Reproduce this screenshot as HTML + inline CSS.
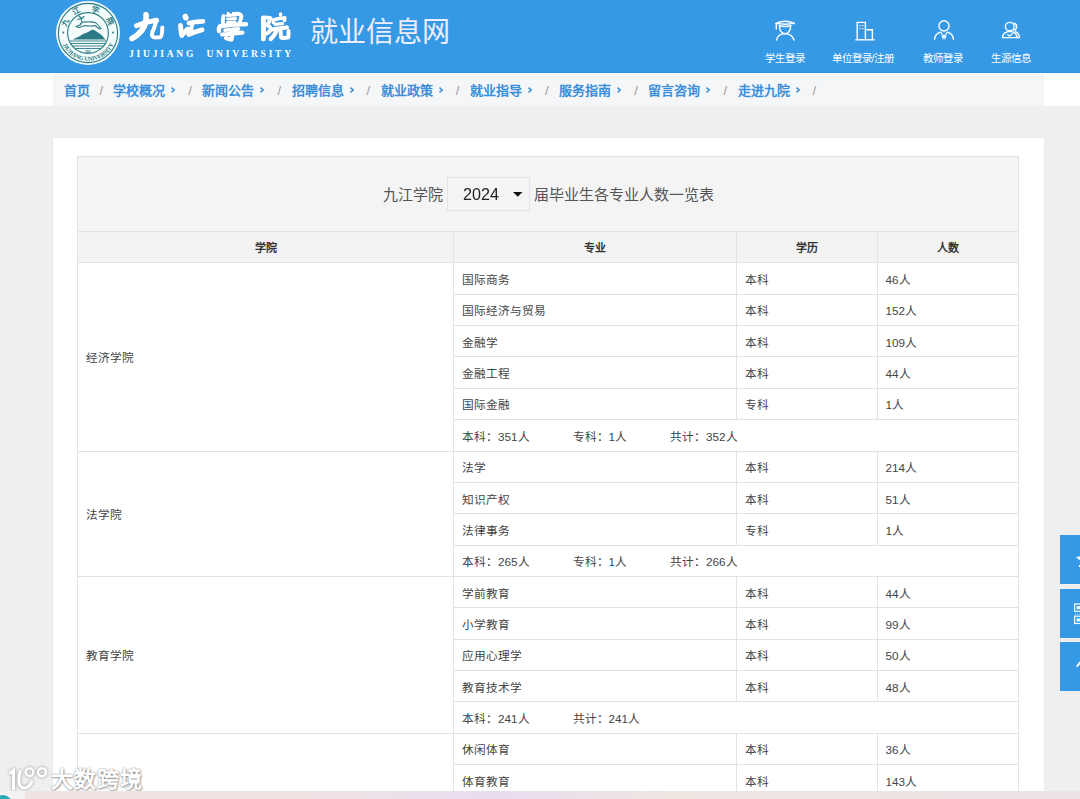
<!DOCTYPE html>
<html lang="zh-CN"><head><meta charset="utf-8">
<style>
*{box-sizing:border-box;margin:0;padding:0}
html,body{width:1080px;height:799px;overflow:hidden;background:#efefef;font-family:"Liberation Sans",sans-serif;position:relative}
.abs{position:absolute}
#hdr{position:absolute;left:0;top:0;width:1080px;height:73px;background:#3699e6;box-shadow:inset 0 -1px 0 #2f8fdb}
#navbg{position:absolute;left:0;top:73px;width:1080px;height:33px;background:#fff}
#nav{position:absolute;left:53px;top:74px;width:991px;height:32px;background:#f5f6f8}
.bc{position:absolute;top:80.7px;font-size:13px;font-weight:bold;color:#3a8fd8;line-height:20px;white-space:nowrap}
.sl{position:absolute;top:81px;font-size:13px;color:#9a9a9a;line-height:20px}
#card{position:absolute;left:53px;top:138px;width:991px;height:700px;background:#fff;box-shadow:0 0 2px rgba(0,0,0,.06)}
table{position:absolute;left:77px;top:156px;width:941px;border-collapse:collapse;table-layout:fixed;font-size:11.7px;color:#444}
td,th{border:1px solid #e2e2e2;padding:0 8px;white-space:nowrap}
th{background:#f3f3f3;font-weight:bold;text-align:center;color:#333;height:31px;font-size:11px}
tr{height:31.36px}
.title td{height:75px;background:#f4f4f4;text-align:center;font-size:15px;color:#555}
.sum span{display:inline-block;margin-right:43px}
.menu{position:absolute;top:50px;font-size:10.5px;color:#fff;white-space:nowrap}
.side{position:absolute;left:1060px;width:30px;height:49px;background:#3699e6}
.callig{font-size:30px;font-weight:900;color:#fff;line-height:36px;-webkit-text-stroke:0.6px #fff;text-shadow:1px 1px 1px rgba(60,60,60,.35)}
.eng{font-family:"Liberation Serif",serif;font-size:9.5px;font-weight:bold;color:#fff;letter-spacing:2.78px;line-height:12px;white-space:nowrap}
.sub{font-size:28px;color:#efedfb;line-height:36px;white-space:nowrap}
.ch{position:absolute;top:86px}
.ttl{font-size:15px;color:#555;line-height:22px;white-space:nowrap}
.selbox{width:83px;height:34px;border:1px solid #e3e3e3;background:#f4f4f4}
.yr{font-size:17px;color:#222;line-height:22px;transform:scaleX(0.95);transform-origin:0 0}
.wmt{font-size:22px;font-weight:bold;color:#fff;line-height:30px;letter-spacing:1px;text-shadow:0 0 2px rgba(0,0,0,.45),1px 1px 2px rgba(0,0,0,.3)}
</style></head><body>
<div id="hdr">
<svg class="abs" style="left:55px;top:1px" width="66" height="64" viewBox="0 0 66 64">
 <circle cx="33" cy="32" r="32" fill="#f4fbfb"/>
 <circle cx="33" cy="32" r="29.6" fill="none" stroke="#2a7b83" stroke-width="1.1"/>
 <circle cx="33" cy="32" r="20.4" fill="none" stroke="#2a7b83" stroke-width="1.1"/>
 <circle cx="8.3" cy="31.5" r="1" fill="#2a7b83"/>
 <circle cx="58" cy="31.5" r="1" fill="#2a7b83"/>
 <text transform="translate(10.16 21.35) rotate(-65)" x="0" y="3" font-size="7.6" font-weight="900" text-anchor="middle" fill="#2a7b83">九</text>
 <text transform="translate(21.56 9.55) rotate(-27)" x="0" y="3" font-size="7.6" font-weight="900" text-anchor="middle" fill="#2a7b83">江</text>
 <text transform="translate(40.79 8.03) rotate(18)" x="0" y="3" font-size="7.6" font-weight="900" text-anchor="middle" fill="#2a7b83">学</text>
 <text transform="translate(55.45 20.56) rotate(63)" x="0" y="3" font-size="7.6" font-weight="900" text-anchor="middle" fill="#2a7b83">院</text>
 <g font-size="6.1" font-family="Liberation Serif" font-weight="bold" fill="#2a7b83"><text transform="translate(8.30 44.75) rotate(62.7)" text-anchor="middle">J</text><text transform="translate(9.52 46.89) rotate(57.6)" text-anchor="middle">I</text><text transform="translate(11.35 49.44) rotate(51.1)" text-anchor="middle">U</text><text transform="translate(13.70 52.00) rotate(44.0)" text-anchor="middle">J</text><text transform="translate(15.54 53.63) rotate(38.9)" text-anchor="middle">I</text><text transform="translate(18.09 55.46) rotate(32.4)" text-anchor="middle">A</text><text transform="translate(21.75 57.42) rotate(23.9)" text-anchor="middle">N</text><text transform="translate(25.82 58.86) rotate(15.0)" text-anchor="middle">G</text><text transform="translate(31.34 59.75) rotate(3.4)" text-anchor="middle">U</text><text transform="translate(35.49 59.69) rotate(-5.1)" text-anchor="middle">N</text><text transform="translate(38.60 59.23) rotate(-11.6)" text-anchor="middle">I</text><text transform="translate(41.63 58.43) rotate(-18.1)" text-anchor="middle">V</text><text transform="translate(45.32 56.92) rotate(-26.3)" text-anchor="middle">E</text><text transform="translate(48.76 54.90) rotate(-34.5)" text-anchor="middle">R</text><text transform="translate(51.62 52.65) rotate(-42.0)" text-anchor="middle">S</text><text transform="translate(53.49 50.79) rotate(-47.5)" text-anchor="middle">I</text><text transform="translate(55.37 48.50) rotate(-53.6)" text-anchor="middle">T</text><text transform="translate(57.50 45.13) rotate(-61.8)" text-anchor="middle">Y</text></g>
 <path d="M17.5 38.5 L22 36.5 L25 35 L28 33 L31 32 L34 30.5 L37.5 28.5 L40 29.5 L43 31.5 L46.5 34 L50.5 38.5 Z" fill="#2a7b83"/>
 <path d="M14.5 40 H51.5 M15.5 42.5 H50.5 M17 45 H49 M20 47.5 H46" stroke="#2a7b83" stroke-width="0.9"/>
 <text x="33" y="51.5" font-size="3.2" font-family="Liberation Serif" font-weight="bold" text-anchor="middle" fill="#2a7b83">1901</text>
 <path d="M25.5 22.5 Q28 20.5 33 21 Q38 20.5 41 22 L46 27.5 L44.5 28 L40 24.5 Q35 25.5 30 24.5 L24 26.5 L21 25.5 L26 23.5 Z M27 21.5 L26 17 L24 15 M26.3 18 L29 15.5 M25.8 17.5 L22.8 18.5" fill="#fff" stroke="#2a7b83" stroke-width="1.1" stroke-linejoin="round" stroke-linecap="round"/>
</svg>
<svg class="abs" style="left:127px;top:8px;filter:drop-shadow(0.6px 0.8px 0.5px rgba(40,40,40,.4))" width="82" height="38" viewBox="0 0 82 38" fill="none" stroke="#fff" stroke-linecap="round" stroke-linejoin="round">
 <path d="M19 6.5 Q19.8 15 15.5 21.5 Q11 27.5 5 30.5" stroke-width="5.7"/>
 <path d="M9.5 17.8 Q19 13.5 29.5 12.2" stroke-width="5.1"/>
 <path d="M29.5 12.2 Q27.5 19.5 25.3 24.5 Q23.8 29.3 28 29.5 L33 29.3 Q35.2 28.5 35.3 19.5" stroke-width="4.1"/>
 <ellipse cx="58.6" cy="9.2" rx="2.9" ry="3.6" transform="rotate(-25 58.6 9.2)" fill="#fff" stroke="none"/>
 <path d="M53.5 17.5 Q54 25 54.8 27.5 Q57 24 61 21" stroke-width="4.9"/>
 <path d="M62 15 Q69 13.5 76 13.4" stroke-width="4.7"/>
 <path d="M65.3 16 Q64.5 21 63.5 25" stroke-width="3.9"/>
 <path d="M61.8 26.5 Q68 23.5 75 21.8" stroke-width="4.9"/>
</svg>

<svg class="abs" style="left:210px;top:8px;filter:drop-shadow(0.6px 0.8px 0.5px rgba(40,40,40,.4))" width="82" height="38" viewBox="0 0 82 38" fill="none" stroke="#fff" stroke-linecap="round" stroke-linejoin="round">
 <path d="M13.5 8 Q12.5 13 13 16.5" stroke-width="3.9"/>
 <path d="M17 7.5 L26 7 M17.5 11 L25.5 10.5 M17.5 14.5 L25 14" stroke-width="3.1"/>
 <path d="M25 6 Q30 5 31.5 8 Q30.5 12 29.5 16" stroke-width="3.9"/>
 <path d="M18 5 L20 7 M23 5 L24 7" stroke-width="2.5"/>
 <path d="M9 23 Q8.5 19.5 10 18.2 Q22 16 36 16.2" stroke-width="4.5"/>
 <path d="M15 22.2 Q22 21 28.5 20.8 Q26 23 22.5 24.5" stroke-width="3.7"/>
 <path d="M12 26.5 Q22 25.5 32.5 24.6" stroke-width="4.1"/>
 <path d="M22.3 24.5 Q22 29 21.5 31.5 Q19 31.5 16 30" stroke-width="4.3"/>
 <path d="M53.3 10 Q53.8 20 53.4 31" stroke-width="4.9"/>
 <path d="M53.5 9.6 Q58 9.2 60.5 10 Q59.5 14 57 17 Q61 19 61 21.5 Q59 25 55 26" stroke-width="3.9"/>
 <ellipse cx="70.5" cy="6.6" rx="1.8" ry="2.4" fill="#fff" stroke="none"/>
 <path d="M63.5 14.5 L63.3 12 Q69 10 74.8 9.8 L74.5 12.5" stroke-width="3.7"/>
 <path d="M65 16.3 Q69 15.6 72.5 15.6" stroke-width="3.3"/>
 <path d="M61.8 21.6 Q69.5 20.2 77 19.4" stroke-width="4.1"/>
 <path d="M66.5 22 Q65 27.5 60.8 31" stroke-width="4.3"/>
 <path d="M70.5 22 Q70.8 27 71.2 29.8 Q75 30.2 78.2 29.5 Q78.8 26 78.5 23" stroke-width="4.1"/>
</svg>

<div class="abs eng" style="left:129px;top:48px">JIUJIANG&nbsp;&nbsp;UNIVERSITY</div>
<svg class="abs" style="left:770px;top:15px" width="30" height="30" viewBox="0 0 30 30" fill="none" stroke="#fff" stroke-width="1.4" stroke-linecap="round">
 <path d="M6 8.4 Q15.2 4 24.4 8.4"/>
 <path d="M6 8.4 Q15 10 24.4 8.4"/>
 <path d="M6.3 8.6 V14"/>
 <path d="M9.3 10.5 Q15 12.5 20.8 10.5"/>
 <path d="M9.5 11 Q9.8 18.5 15 18.6 Q20.3 18.5 20.6 11"/>
 <path d="M6.5 25 Q8 18.8 15 18.6 Q22 18.8 24 25"/>
</svg>
<svg class="abs" style="left:850px;top:15px" width="30" height="30" viewBox="0 0 30 30" fill="none" stroke="#fff" stroke-width="1.4">
 <path d="M7.2 24.6 V7.4 H15.4 V24.6"/>
 <path d="M16.5 14.7 H22.4 V24.6"/>
 <path d="M5.3 24.8 H24.6"/>
 <rect x="9.3" y="10" width="1.2" height="1.2" fill="#fff" stroke="none"/>
 <rect x="12.2" y="10" width="1.2" height="1.2" fill="#fff" stroke="none"/>
 <rect x="9.3" y="13" width="1.2" height="1.2" fill="#fff" stroke="none"/>
 <rect x="12.2" y="13" width="1.2" height="1.2" fill="#fff" stroke="none"/>
</svg>
<svg class="abs" style="left:929px;top:15px" width="30" height="30" viewBox="0 0 30 30" fill="none" stroke="#fff" stroke-width="1.4" stroke-linecap="round">
 <circle cx="15" cy="10.9" r="5.1"/>
 <path d="M5.5 24.3 Q6.3 18.2 11.5 17.2"/>
 <path d="M18.5 17.2 Q23.7 18.2 24.5 24.3"/>
 <path d="M12.6 17.8 L13.9 23.3 L15 20.2 L16.1 23.3 L17.4 17.8" stroke-width="1.1"/>
</svg>
<svg class="abs" style="left:996px;top:15px" width="30" height="30" viewBox="0 0 30 30" fill="none" stroke="#fff" stroke-width="1.4" stroke-linecap="round">
 <ellipse cx="13.8" cy="11.6" rx="4.4" ry="4.2"/>
 <path d="M18.6 8.2 Q21 9.5 20.6 12.5 Q20.2 14.6 18.2 15.4"/>
 <path d="M6.6 22.6 Q7 16.6 13.8 16.4 Q20.6 16.6 21 22.6 Z"/>
 <path d="M19.5 16.6 Q23.3 18.5 23.5 22.6 H21"/>
 <path d="M11.6 19.4 L13.6 21.2 L16.8 18.4" stroke-width="1.2"/>
</svg>
<div class="menu" style="left:764.5px">学生登录</div>
<div class="menu" style="left:831.5px">单位登录/注册</div>
<div class="menu" style="left:923px">教师登录</div>
<div class="menu" style="left:990.5px">生源信息</div>
<div class="abs sub" style="left:310px;top:15px">就业信息网</div>
</div>

<div id="navbg"></div>
<div id="nav"></div>
<div class="bc" style="left:64px">首页</div>
<div class="sl" style="left:99.5px">/</div>
<div class="bc" style="left:113.2px">学校概况</div>
<svg class="ch" style="left:170.2px" width="6" height="8" viewBox="0 0 6 8"><path d="M1.5 1.6 L4.2 4 L1.5 6.4" fill="none" stroke="#3a8fd8" stroke-width="1.5"/></svg>
<div class="sl" style="left:188.2px">/</div>
<div class="bc" style="left:202.4px">新闻公告</div>
<svg class="ch" style="left:259.4px" width="6" height="8" viewBox="0 0 6 8"><path d="M1.5 1.6 L4.2 4 L1.5 6.4" fill="none" stroke="#3a8fd8" stroke-width="1.5"/></svg>
<div class="sl" style="left:277.4px">/</div>
<div class="bc" style="left:291.6px">招聘信息</div>
<svg class="ch" style="left:348.6px" width="6" height="8" viewBox="0 0 6 8"><path d="M1.5 1.6 L4.2 4 L1.5 6.4" fill="none" stroke="#3a8fd8" stroke-width="1.5"/></svg>
<div class="sl" style="left:366.6px">/</div>
<div class="bc" style="left:380.8px">就业政策</div>
<svg class="ch" style="left:437.8px" width="6" height="8" viewBox="0 0 6 8"><path d="M1.5 1.6 L4.2 4 L1.5 6.4" fill="none" stroke="#3a8fd8" stroke-width="1.5"/></svg>
<div class="sl" style="left:455.8px">/</div>
<div class="bc" style="left:470.0px">就业指导</div>
<svg class="ch" style="left:527.0px" width="6" height="8" viewBox="0 0 6 8"><path d="M1.5 1.6 L4.2 4 L1.5 6.4" fill="none" stroke="#3a8fd8" stroke-width="1.5"/></svg>
<div class="sl" style="left:545.0px">/</div>
<div class="bc" style="left:559.2px">服务指南</div>
<svg class="ch" style="left:616.2px" width="6" height="8" viewBox="0 0 6 8"><path d="M1.5 1.6 L4.2 4 L1.5 6.4" fill="none" stroke="#3a8fd8" stroke-width="1.5"/></svg>
<div class="sl" style="left:634.2px">/</div>
<div class="bc" style="left:648.4px">留言咨询</div>
<svg class="ch" style="left:705.4px" width="6" height="8" viewBox="0 0 6 8"><path d="M1.5 1.6 L4.2 4 L1.5 6.4" fill="none" stroke="#3a8fd8" stroke-width="1.5"/></svg>
<div class="sl" style="left:723.4px">/</div>
<div class="bc" style="left:737.6px">走进九院</div>
<svg class="ch" style="left:794.6px" width="6" height="8" viewBox="0 0 6 8"><path d="M1.5 1.6 L4.2 4 L1.5 6.4" fill="none" stroke="#3a8fd8" stroke-width="1.5"/></svg>
<div class="sl" style="left:812.6px">/</div>
<div id="card"></div>
<table>
<colgroup><col style="width:376px"><col style="width:282.5px"><col style="width:141px"><col style="width:141.5px"></colgroup>
<tr class="title"><td colspan="4"></td></tr>
<tr><th>学院</th><th>专业</th><th>学历</th><th>人数</th></tr>
<tr><td rowspan="6">经济学院</td><td>国际商务</td><td>本科</td><td>46人</td></tr>
<tr><td>国际经济与贸易</td><td>本科</td><td>152人</td></tr>
<tr><td>金融学</td><td>本科</td><td>109人</td></tr>
<tr><td>金融工程</td><td>本科</td><td>44人</td></tr>
<tr><td>国际金融</td><td>专科</td><td>1人</td></tr>
<tr class="sum"><td colspan="3"><span>本科：351人</span><span>专科：1人</span><span>共计：352人</span></td></tr>
<tr><td rowspan="4">法学院</td><td>法学</td><td>本科</td><td>214人</td></tr>
<tr><td>知识产权</td><td>本科</td><td>51人</td></tr>
<tr><td>法律事务</td><td>专科</td><td>1人</td></tr>
<tr class="sum"><td colspan="3"><span>本科：265人</span><span>专科：1人</span><span>共计：266人</span></td></tr>
<tr><td rowspan="5">教育学院</td><td>学前教育</td><td>本科</td><td>44人</td></tr>
<tr><td>小学教育</td><td>本科</td><td>99人</td></tr>
<tr><td>应用心理学</td><td>本科</td><td>50人</td></tr>
<tr><td>教育技术学</td><td>本科</td><td>48人</td></tr>
<tr class="sum"><td colspan="3"><span>本科：241人</span><span>共计：241人</span></td></tr>
<tr><td rowspan="6">体育学院</td><td>休闲体育</td><td>本科</td><td>36人</td></tr>
<tr><td>体育教育</td><td>本科</td><td>143人</td></tr>
<tr><td>社会体育指导与管理</td><td>本科</td><td>60人</td></tr>
<tr><td>运动训练</td><td>本科</td><td>40人</td></tr>
<tr><td>体育保健</td><td>专科</td><td>20人</td></tr>
<tr class="sum"><td colspan="3"><span>本科：239人</span><span>共计：239人</span></td></tr>
</table>
<div class="abs ttl" style="left:383px;top:184px">九江学院</div>
<div class="abs selbox" style="left:447px;top:177px"></div>
<div class="abs yr" style="left:463px;top:184px">2024</div>
<svg class="abs" style="left:513px;top:192px" width="10" height="5" viewBox="0 0 10 5"><path d="M0 0 H9.5 L4.75 4.8 Z" fill="#111"/></svg>
<div class="abs ttl" style="left:534px;top:184px">届毕业生各专业人数一览表</div>
<div class="side" style="top:535px"><svg class="abs" style="left:0;top:0" width="20" height="49" viewBox="0 0 20 49"><path d="M16 22.2 L20 21.3 L20 25.2 Z" fill="#fff"/><rect x="19" y="30" width="1" height="2" fill="#fff"/></svg></div>
<div class="side" style="top:588.5px"><svg class="abs" style="left:0;top:0" width="20" height="49" viewBox="0 0 20 49" fill="none" stroke="#fff" stroke-width="1.2"><rect x="14.6" y="15" width="6" height="7.3"/><rect x="14.6" y="27.2" width="6" height="7.3"/><rect x="16.6" y="17.2" width="4" height="3" fill="#fff" stroke="none"/><rect x="16.6" y="29.4" width="4" height="3" fill="#fff" stroke="none"/><path d="M15 24.8 L16 25.4 M17.2 24.8 L18.2 25.4 M19.4 24.8 L20 25.2" stroke-width="0.8"/></svg></div>
<div class="side" style="top:642px"><svg class="abs" style="left:0;top:0" width="20" height="49" viewBox="0 0 20 49" fill="none" stroke="#fff" stroke-width="2" stroke-linecap="round"><path d="M17.3 24 L20 20.5"/></svg></div>
<div class="abs wm" style="left:9px;top:765px"><svg width="42" height="28" viewBox="0 0 42 28" fill="none" stroke="#fff" stroke-width="3" stroke-linecap="round" style="filter:drop-shadow(0 0 1.5px rgba(0,0,0,.4))"><path d="M1.5 8 L4.5 5.5 V24"/><path d="M11 6.5 Q7.5 22 15 23 Q20 23 22.5 17"/><circle cx="20.5" cy="7.2" r="3.8" stroke-width="2.4"/><circle cx="33" cy="7.2" r="4" stroke-width="2.4"/></svg></div>
<div class="abs wmt" style="left:51px;top:765px">大数跨境</div>
<div class="abs" style="left:0;top:791px;width:1080px;height:8px;background:linear-gradient(90deg,#efe3e3 0%,#efe3e5 30%,#e7ddf0 46%,#efe6e2 62%,#eee4e4 82%,#ede3e6 100%)"></div>
<div class="abs" style="left:0;top:791px;width:25px;height:8px;background:#f2f2f2"></div>
<div class="abs" style="left:-6px;top:795px;width:18px;height:18px;border-radius:50%;background:#2aa9b5"></div>
</body></html>
